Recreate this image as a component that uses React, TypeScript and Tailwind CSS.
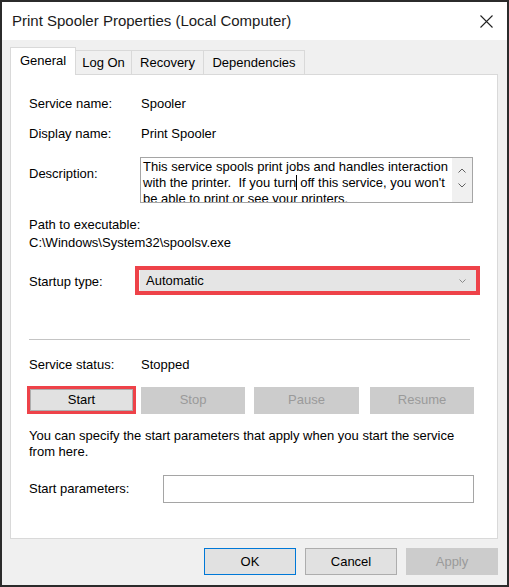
import React from "react";

function Btn({
  label,
  disabled,
  className = "",
}: {
  label: string;
  disabled?: boolean;
  className?: string;
}) {
  return (
    <div
      className={
        "flex items-center justify-center border " +
        (disabled
          ? "bg-[#cccccc] border-[#cccccc] text-[#9a9a9a] "
          : "bg-[#e1e1e1] border-[#adadad] text-black ") +
        className
      }
    >
      {label}
    </div>
  );
}

export default function App() {
  return (
    <div className="w-[509px] h-[587px] border-2 border-[#2b2b2b] bg-[#f0f0f0] flex flex-col font-['Liberation_Sans',Arial,sans-serif] text-[13px] text-black">
      {/* Title bar */}
      <div className="h-[38px] bg-white flex items-center justify-between pl-[10px] pr-[14px]">
        <span className="text-[15px] text-[#1a1a1a]">Print Spooler Properties (Local Computer)</span>
        <svg width="13" height="13" viewBox="0 0 13 13" className="text-[#222]">
          <path d="M0.5 0.5 L12.5 12.5 M12.5 0.5 L0.5 12.5" stroke="currentColor" strokeWidth="1.1" />
        </svg>
      </div>

      {/* Body */}
      <div className="flex-1 pl-[8px] pr-[9px] pt-[7px] flex flex-col">
        {/* Tabs */}
        <div className="flex items-end h-[27px]">
          <div className="relative z-10 -mb-px h-[28px] w-[66px] bg-white border-l border-t border-r border-[#d9d9d9] flex items-center justify-center pb-[2px]">
            General
          </div>
          <div className="h-[24px] w-[56px] border-t border-r border-[#d9d9d9] flex items-center justify-center">
            Log On
          </div>
          <div className="h-[24px] w-[72px] border-t border-r border-[#d9d9d9] flex items-center justify-center">
            Recovery
          </div>
          <div className="h-[24px] w-[101px] border-t border-r border-[#d9d9d9] flex items-center justify-center">
            Dependencies
          </div>
        </div>

        {/* Panel */}
        <div className="h-[465px] bg-white border border-[#d9d9d9] pl-[18px] flex flex-col">
          <div className="mt-[19px] h-[20px] flex items-center">
            <span className="w-[112px]">Service name:</span>
            <span>Spooler</span>
          </div>
          <div className="mt-[10px] h-[20px] flex items-center">
            <span className="w-[112px]">Display name:</span>
            <span>Print Spooler</span>
          </div>

          {/* Description */}
          <div className="mt-[13px] h-[46px] flex">
            <span className="w-[111px] pt-[7px]">Description:</span>
            <div className="w-[333px] h-[46px] border border-[#a5a5a5] flex overflow-hidden">
              <div className="flex-1 pl-[2px] pt-[1px] leading-[16px] overflow-hidden">
                This service spools print jobs and handles interaction with the printer.&nbsp; If you turn
                <span className="inline-block w-px h-[15px] bg-black align-[-3px] mr-[3px]"></span>
                off this service, you won't be able to print or see your printers.
              </div>
              <div className="w-[20px] bg-[#f0f0f0] flex flex-col items-center pt-[10px] gap-[10px]">
                <svg width="8" height="5" viewBox="0 0 8 5">
                  <path d="M0.5 4.5 L4 1 L7.5 4.5" fill="none" stroke="#606060" strokeWidth="1" />
                </svg>
                <svg width="8" height="5" viewBox="0 0 8 5">
                  <path d="M0.5 0.5 L4 4 L7.5 0.5" fill="none" stroke="#606060" strokeWidth="1" />
                </svg>
              </div>
            </div>
          </div>

          {/* Path */}
          <div className="mt-[13px] leading-[18px]">
            <div>Path to executable:</div>
            <div>C:\Windows\System32\spoolsv.exe</div>
          </div>

          {/* Startup type */}
          <div className="mt-[14px] h-[29px] flex items-center">
            <span className="w-[106px] pt-[2px]">Startup type:</span>
            <div className="w-[345px] h-[29px] border-[4px] border-[#ee4249] bg-white">
              <div className="h-full bg-[#e5e5e5] border-l border-[#f5f5f5] flex items-center justify-between pl-[6px] pr-[10px]">
                <span className="pt-[1px]">Automatic</span>
                <svg width="7" height="4" viewBox="0 0 7 4">
                  <path d="M0.5 0.5 L3.5 3.5 L6.5 0.5" fill="none" stroke="#8a8a8a" strokeWidth="1" />
                </svg>
              </div>
            </div>
          </div>

          {/* Separator */}
          <div className="mt-[44px] w-[441px] border-t border-[#c4c4c4]"></div>

          <div className="mt-[15px] h-[20px] flex items-center">
            <span className="w-[112px]">Service status:</span>
            <span>Stopped</span>
          </div>

          {/* Control buttons */}
          <div className="mt-[11px] h-[28px] flex items-center -ml-[2px]">
            <div className="w-[109px] h-[28px] border-[3px] border-[#ee4249]">
              <Btn label="Start" className="h-full" />
            </div>
            <Btn label="Stop" disabled className="ml-[5px] w-[104px] h-[27px]" />
            <Btn label="Pause" disabled className="ml-[9px] w-[105px] h-[27px]" />
            <Btn label="Resume" disabled className="ml-[11px] w-[104px] h-[27px]" />
          </div>

          <div className="mt-[14px] leading-[16px]">
            You can specify the start parameters that apply when you start the service
            <br />
            from here.
          </div>

          <div className="mt-[15px] h-[28px] flex items-center">
            <span className="w-[134px]">Start parameters:</span>
            <div className="w-[311px] h-[28px] border border-[#a5a5a5] bg-white"></div>
          </div>
        </div>

        {/* Footer buttons */}
        <div className="mt-[9px] flex justify-end gap-[9px]">
          <Btn label="OK" className="w-[92px] h-[27px] !border-[#0078d7]" />
          <Btn label="Cancel" className="w-[92px] h-[27px]" />
          <Btn label="Apply" disabled className="w-[92px] h-[27px]" />
        </div>
      </div>
    </div>
  );
}
